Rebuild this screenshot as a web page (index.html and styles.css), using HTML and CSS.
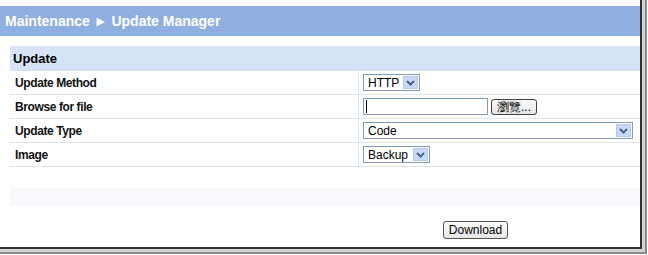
FILE: index.html
```html
<!DOCTYPE html>
<html lang="en">
<head>
    <meta charset="UTF-8">
    <title>Update Manager</title>
    <link rel="stylesheet" href="styles.css">
</head>
<body>
    <div class="shadow-outer">
        <div class="shadow-inner">
            <div class="frame">
                <div class="title-bar">Maintenance &#9658; Update Manager</div>

                <table class="update-table">
                    <tr class="head-row">
                        <td colspan="2">Update</td>
                    </tr>
                    <tr>
                        <td class="label">Update Method</td>
                        <td class="field">
                            <span class="select sel-http"><span class="sel-text">HTTP</span><span class="arrow"><svg width="9" height="6" viewBox="0 0 9 6"><path d="M1 1l3.5 3.5L8 1" fill="none" stroke="#4d6185" stroke-width="2"/></svg></span></span>
                        </td>
                    </tr>
                    <tr>
                        <td class="label">Browse for file</td>
                        <td class="field">
                            <span class="file-box"><span class="caret"></span></span><span class="browse-btn">瀏覽...</span>
                        </td>
                    </tr>
                    <tr>
                        <td class="label">Update Type</td>
                        <td class="field">
                            <span class="select sel-code"><span class="sel-text">Code</span><span class="arrow"><svg width="9" height="6" viewBox="0 0 9 6"><path d="M1 1l3.5 3.5L8 1" fill="none" stroke="#4d6185" stroke-width="2"/></svg></span></span>
                        </td>
                    </tr>
                    <tr>
                        <td class="label">Image</td>
                        <td class="field">
                            <span class="select sel-backup"><span class="sel-text">Backup</span><span class="arrow"><svg width="9" height="6" viewBox="0 0 9 6"><path d="M1 1l3.5 3.5L8 1" fill="none" stroke="#4d6185" stroke-width="2"/></svg></span></span>
                        </td>
                    </tr>
                </table>

                <div class="spacer-band"></div>

                <div class="actions">
                    <button class="download-btn">Download</button>
                </div>
            </div>
        </div>
    </div>
</body>
</html>
```

FILE: styles.css
```css
body {
    margin: 0;
    font-family: "Liberation Sans", Arial, sans-serif;
    background: #fff;
}
/* screenshot drop shadow: dark line, light gap, grey line */
.shadow-outer {
    width: 647px;
    height: 254px;
    box-sizing: border-box;
    border-right: 2px solid #8a8a8a;
    border-bottom: 2px solid #8a8a8a;
}
.shadow-inner {
    width: 645px;
    height: 252px;
    box-sizing: border-box;
    border-right: 3px solid #d4d4d4;
    border-bottom: 3px solid #d4d4d4;
}
.frame {
    width: 642px;
    height: 249px;
    padding-top: 6px;
    box-sizing: border-box;
    background: #fff;
    border-right: 2px solid #333;
    border-bottom: 2px solid #333;
}
.title-bar {
    height: 30px;
    line-height: 30px;
    background: #8fafe0;
    color: #fff;
    font-weight: bold;
    font-size: 14px;
    padding-left: 5px;
}
.update-table {
    margin: 10px 0 0 10px;
    width: 630px;
    border-collapse: collapse;
    font-size: 12px;
    letter-spacing: -0.4px;
}
.update-table td {
    border-bottom: 1px solid #dde3ea;
    height: 23px;
    padding: 0;
}
.head-row td {
    background: #d5e3f4;
    font-size: 13px;
    font-weight: bold;
    height: 25px;
    padding-left: 3px;
    border-bottom: none;
    letter-spacing: 0;
}
.label {
    width: 343px;
    font-weight: bold;
    padding-left: 5px !important;
    border-right: 1px solid #dde3ea;
    color: #111;
}
.field {
    padding-left: 4px !important;
    letter-spacing: 0;
}
.select {
    display: inline-flex;
    align-items: center;
    justify-content: space-between;
    height: 17px;
    border: 1px solid #7f9db9;
    box-sizing: border-box;
    vertical-align: middle;
    background: #fff;
    font-size: 12px;
}
.sel-text {
    padding-left: 4px;
}
.arrow {
    display: flex;
    align-items: center;
    justify-content: center;
    width: 15px;
    height: 13px;
    margin-right: 1px;
    background: #c8d8fa;
    border: 1px solid #b6c8ef;
    box-sizing: border-box;
}
.sel-http {
    width: 57px;
}
.sel-code {
    width: 270px;
}
.sel-backup {
    width: 67px;
}
.file-box {
    display: inline-block;
    width: 125px;
    height: 17px;
    border: 1px solid #7f9db9;
    box-sizing: border-box;
    vertical-align: middle;
    position: relative;
}
.caret {
    position: absolute;
    left: 2px;
    top: 1px;
    width: 1px;
    height: 13px;
    background: #000;
}
.browse-btn {
    display: inline-block;
    margin-left: 3px;
    height: 16px;
    line-height: 14px;
    padding: 0 5px;
    border: 1px solid #404040;
    border-radius: 3px;
    background: linear-gradient(#fafafa, #e4e4e4);
    font-size: 12px;
    box-sizing: border-box;
    vertical-align: middle;
}
.spacer-band {
    margin: 21px 0 0 10px;
    height: 18px;
    background: #f7f9fc;
}
.actions {
    margin-top: 14px;
    padding-left: 443px;
}
.download-btn {
    font-family: "Liberation Sans", Arial, sans-serif;
    font-size: 12px;
    height: 18px;
    width: 65px;
    padding: 0;
    border: 1px solid #555;
    border-radius: 3px;
    background: linear-gradient(#fdfdfd, #e6e6e6);
    color: #000;
}
```
